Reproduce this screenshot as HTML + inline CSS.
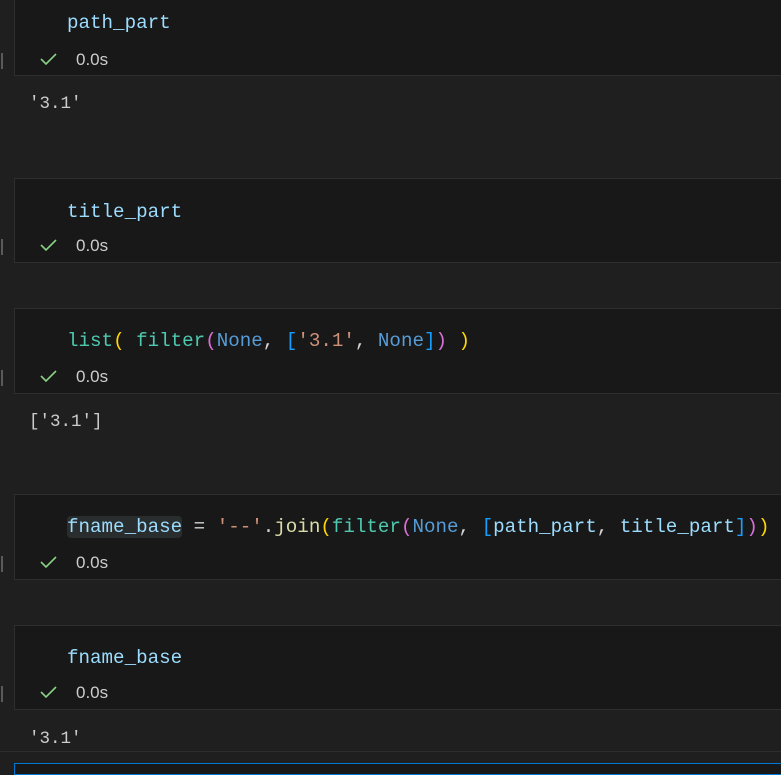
<!DOCTYPE html>
<html><head><style>
body{margin:0;width:781px;height:769px;background:#1f1f1f;overflow:hidden;position:relative;font-family:"Liberation Mono",monospace}
.cell{position:absolute;left:14px;right:-2px;background:#181818;border:1px solid #2e2e2e}
.code{position:absolute;left:52px;font-size:19.2px;line-height:24px;white-space:pre;color:#d4d4d4}
.st{position:absolute;left:0;width:100%;height:24px}
.chk{position:absolute;left:24px;top:3px}
.t{position:absolute;left:61px;top:1px;font-family:"Liberation Sans",sans-serif;font-size:17px;color:#cccccc}
.mk{position:absolute;left:-14px;top:4px;width:2px;height:16px;background:#5a5a5a}
.out{position:absolute;left:29px;font-size:17.5px;line-height:22px;color:#cccccc;white-space:pre}
.v{color:#9cdcfe}.f{color:#dcdcaa}.c{color:#4ec9b0}.s{color:#ce9178}.k{color:#569cd6}
.y{color:#ffd700}.p{color:#da70d6}.b{color:#179fff}
.hl{background:#2a2d2e;border-radius:4px}
</style></head><body>

<div class="cell" style="top:-10px;height:84px">
 <div class="code" style="top:20px"><span class="v">path_part</span></div>
 <div class="st" style="top:58px"><span class="mk"></span><svg class="chk" width="18" height="14"><path d="M2 7 L7 12 L17 2" stroke="#89d185" stroke-width="1.6" fill="none"/></svg><span class="t">0.0s</span></div>
</div>
<div class="out" style="top:93px">'3.1'</div>

<div class="cell" style="top:178px;height:83px">
 <div class="code" style="top:21px"><span class="v">title_part</span></div>
 <div class="st" style="top:56px"><span class="mk"></span><svg class="chk" width="18" height="14"><path d="M2 7 L7 12 L17 2" stroke="#89d185" stroke-width="1.6" fill="none"/></svg><span class="t">0.0s</span></div>
</div>

<div class="cell" style="top:308px;height:84px">
 <div class="code" style="top:20px"><span class="c">list</span><span class="y">(</span> <span class="c">filter</span><span class="p">(</span><span class="k">None</span>, <span class="b">[</span><span class="s">'3.1'</span>, <span class="k">None</span><span class="b">]</span><span class="p">)</span> <span class="y">)</span></div>
 <div class="st" style="top:57px"><span class="mk"></span><svg class="chk" width="18" height="14"><path d="M2 7 L7 12 L17 2" stroke="#89d185" stroke-width="1.6" fill="none"/></svg><span class="t">0.0s</span></div>
</div>
<div class="out" style="top:411px">['3.1']</div>

<div class="cell" style="top:494px;height:84px">
 <div class="code" style="top:20px"><span class="v hl">fname_base</span> = <span class="s">'--'</span>.<span class="f">join</span><span class="y">(</span><span class="c">filter</span><span class="p">(</span><span class="k">None</span>, <span class="b">[</span><span class="v">path_part</span>, <span class="v">title_part</span><span class="b">]</span><span class="p">)</span><span class="y">)</span></div>
 <div class="st" style="top:57px"><span class="mk"></span><svg class="chk" width="18" height="14"><path d="M2 7 L7 12 L17 2" stroke="#89d185" stroke-width="1.6" fill="none"/></svg><span class="t">0.0s</span></div>
</div>

<div class="cell" style="top:625px;height:83px">
 <div class="code" style="top:20px"><span class="v">fname_base</span></div>
 <div class="st" style="top:56px"><span class="mk"></span><svg class="chk" width="18" height="14"><path d="M2 7 L7 12 L17 2" stroke="#89d185" stroke-width="1.6" fill="none"/></svg><span class="t">0.0s</span></div>
</div>
<div class="out" style="top:728px">'3.1'</div>
<div style="position:absolute;top:751px;left:0;right:0;height:1px;background:#2e2e2e"></div>
<div style="position:absolute;top:763px;left:14px;right:-2px;height:10px;border:1px solid #0078d4;background:#181818"></div>
</body></html>
